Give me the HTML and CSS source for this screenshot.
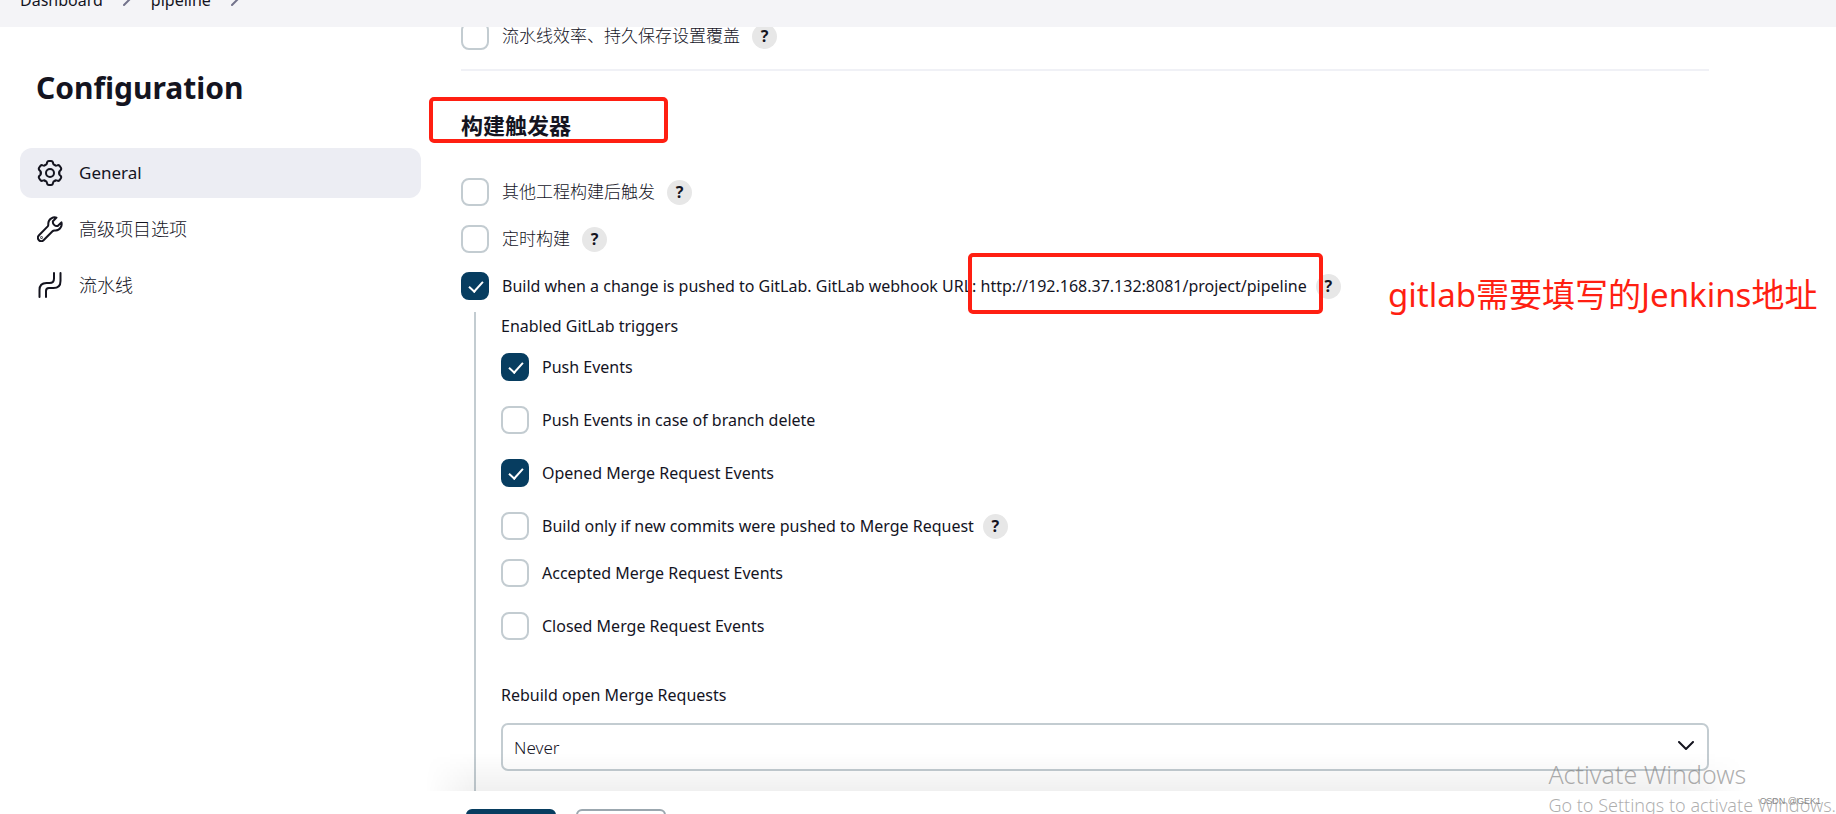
FILE: index.html
```html
<!DOCTYPE html>
<html lang="zh-CN">
  <head>
    <meta charset="UTF-8" />
    <meta name="viewport" content="width=device-width, initial-scale=1.0" />
    <title>pipeline Config</title>
    <link rel="stylesheet" href="styles.css">
  </head>

  <body>
    <nav class="breadcrumbs">
      <a href="#">Dashboard</a>
      <svg class="crumb-arrow" viewBox="0 0 8 16"><path d="M1 2l6 6-6 6" /></svg>
      <a href="#">pipeline</a>
      <svg class="crumb-arrow" viewBox="0 0 8 16"><path d="M1 2l6 6-6 6" /></svg>
    </nav>

    <div class="page">
      <aside class="sidebar">
        <h1>Configuration</h1>
        <a href="#" class="task active">
          <svg class="task-icon" viewBox="0 0 26 26">
            <path id="tooth" d="M8.300 4.900Q9.700 5 10 3Q10.200 1 12 1h2Q15.800 1 16 3Q16.300 5 17.700 4.900" />
            <use href="#tooth" transform="rotate(60 13 13)" />
            <use href="#tooth" transform="rotate(120 13 13)" />
            <use href="#tooth" transform="rotate(180 13 13)" />
            <use href="#tooth" transform="rotate(240 13 13)" />
            <use href="#tooth" transform="rotate(300 13 13)" />
            <circle cx="13" cy="13" r="4" />
          </svg>
          General
        </a>
        <a href="#" class="task zh">
          <svg class="task-icon" viewBox="0 0 26 26">
            <path d="M19.500 1.600c-3-1-8 1-8.200 5.600 0 1.500.2 2.300-.6 3.200L2 19.300c-3.200 3.400 1.500 8 4.800 4.700l8.700-8.800c.9-.9 1.700-.6 3.200-.6 4.600-.2 6.700-5.200 5.700-8.200l-3.700 3.600c-2.600.6-5.300-2-4.800-4.800z" />
            <circle cx="4.500" cy="21.600" r="0.300" />
          </svg>
          高级项目选项
        </a>
        <a href="#" class="task zh">
          <svg class="task-icon" viewBox="0 0 26 26">
            <path d="M2.500 25v-7q0-7 7-7h3q4.500 0 4.500-4.500V1M9 25v-6q0-3 3-3h4.500q7 0 7-7V1" />
          </svg>
          流水线
        </a>
      </aside>

      <main class="content">
        <form class="config">
          <div class="row first">
            <input type="checkbox" id="durability">
            <label for="durability" class="zh">流水线效率、持久保存设置覆盖</label>
            <button type="button" class="help">?</button>
          </div>

          <section class="triggers">
            <h2>构建触发器</h2>
            <div class="mark mark-title"></div>
            <div class="row">
              <input type="checkbox" id="upstream">
              <label for="upstream" class="zh">其他工程构建后触发</label>
              <button type="button" class="help">?</button>
            </div>
            <div class="row">
              <input type="checkbox" id="timer">
              <label for="timer" class="zh">定时构建</label>
              <button type="button" class="help">?</button>
            </div>
            <div class="row">
              <input type="checkbox" id="gitlab" checked>
              <label for="gitlab">Build when a change is pushed to GitLab. GitLab webhook URL: <span class="url">http://192.168.37.132:8081/project/pipeline<span class="mark mark-url"></span></span></label>
              <button type="button" class="help">?</button>
              <span class="note">gitlab需要填写的Jenkins地址</span>
            </div>

            <div class="nested">
              <p class="caption">Enabled GitLab triggers</p>
              <div class="row wide">
                <input type="checkbox" id="push" checked>
                <label for="push">Push Events</label>
              </div>
              <div class="row wide">
                <input type="checkbox" id="branch-delete">
                <label for="branch-delete">Push Events in case of branch delete</label>
              </div>
              <div class="row wide">
                <input type="checkbox" id="mr-opened" checked>
                <label for="mr-opened">Opened Merge Request Events</label>
              </div>
              <div class="row">
                <input type="checkbox" id="new-commits">
                <label for="new-commits">Build only if new commits were pushed to Merge Request</label>
                <button type="button" class="help">?</button>
              </div>
              <div class="row wide">
                <input type="checkbox" id="mr-accepted">
                <label for="mr-accepted">Accepted Merge Request Events</label>
              </div>
              <div class="row wide">
                <input type="checkbox" id="mr-closed">
                <label for="mr-closed">Closed Merge Request Events</label>
              </div>
              <label class="caption rebuild" for="rebuild">Rebuild open Merge Requests</label>
              <div class="select-box">
                <select id="rebuild">
                  <option>Never</option>
                </select>
                <svg class="chevron" viewBox="0 0 16 10"><path d="M1 1l7 7 7-7" /></svg>
              </div>
            </div>
          </section>
        </form>

        <div class="bottom-bar">
          <button type="button" class="btn btn-primary" aria-label="保存"></button>
          <button type="button" class="btn" aria-label="应用"></button>
        </div>
      </main>
    </div>

    <div class="activate">
      <p class="activate-title">Activate Windows</p>
      <p>Go to Settings to activate Windows.</p>
    </div>
    <div class="watermark">CSDN @GEK1</div>
  </body>
</html>
```

FILE: styles.css
```css
* {
  margin: 0;
  padding: 0;
  box-sizing: border-box;
}

body {
  font-family: "Noto Sans", "Noto Sans CJK SC", sans-serif;
  font-size: 16px;
  line-height: 24px;
  color: #14141f;
  background-color: white;
  display: flex;
  flex-direction: column;
  height: 100vh;
  overflow: hidden;
  position: relative;
}

a {
  color: inherit;
  text-decoration: none;
}

svg {
  fill: none;
  stroke: currentColor;
  stroke-width: 2;
  stroke-linecap: round;
  stroke-linejoin: round;
}

.breadcrumbs {
  display: flex;
  align-items: flex-end;
  gap: 20px;
  flex: none;
  height: 27px;
  padding: 0 20px 15px;
  background-color: #f4f4f7;
  overflow: hidden;
}

.crumb-arrow {
  width: 8px;
  height: 16px;
  margin-bottom: 5px;
  color: #73738c;
}

.page {
  display: flex;
  flex: 1;
  min-height: 0;
}

.sidebar {
  flex: none;
  width: 421px;
  padding: 41px 0 0 20px;
}

h1 {
  font-size: 30px;
  line-height: 40px;
  font-weight: 700;
  padding-left: 16px;
  margin-bottom: 40px;
}

.task {
  display: flex;
  align-items: center;
  gap: 16px;
  height: 50px;
  padding: 0 17px;
  margin-bottom: 6px;
  border-radius: 12px;
  font-size: 17px;
}

.task.zh {
  font-size: 18px;
  font-weight: 300;
}

.task.active {
  background-color: #ecedf3;
}

.task-icon {
  width: 26px;
  height: 26px;
}

.content {
  flex: 1;
  min-width: 0;
  display: flex;
  flex-direction: column;
  padding: 0 127px 0 40px;
}

.config {
  flex: 1;
  min-height: 0;
  display: flex;
  flex-direction: column;
  clip-path: inset(0 -128px 0 -40px);
}

.row {
  display: flex;
  align-items: center;
  flex: none;
  height: 28px;
  margin-bottom: 19px;
  position: relative;
}

.row.wide {
  margin-bottom: 25px;
}

.row.first {
  margin-top: -5px;
}

.row label {
  margin-left: 13px;
}

.row .zh {
  font-size: 17px;
  font-weight: 300;
  margin-right: 3px;
}

input[type="checkbox"] {
  appearance: none;
  width: 28px;
  height: 28px;
  border: 2px solid #c3ccd1;
  border-radius: 8px;
  background-color: white;
  position: relative;
}

input[type="checkbox"]:checked {
  border-color: #073d60;
  background-color: #073d60;
}

input[type="checkbox"]:checked::after {
  content: "";
  position: absolute;
  left: 9px;
  top: 4px;
  width: 6px;
  height: 12px;
  border: solid white;
  border-width: 0 2px 2px 0;
  transform: rotate(42deg);
}

.help {
  width: 25px;
  height: 25px;
  margin-left: 9px;
  border: none;
  border-radius: 50%;
  background-color: #e7e7e7;
  color: #14141f;
  font: 700 16px/25px "Noto Sans", sans-serif;
}

.triggers {
  display: flex;
  flex-direction: column;
  flex: 1;
  min-height: 0;
  position: relative;
  border-top: 2px solid #f0f1f6;
}

h2 {
  font-size: 22px;
  line-height: 30px;
  font-weight: 700;
  margin: 39px 0 38px;
}

.mark {
  position: absolute;
  border: 4px solid #ff1f12;
  border-radius: 5px;
}

.mark-title {
  left: -32px;
  top: 26px;
  width: 239px;
  height: 46px;
}

.url {
  position: relative;
}

.mark-url {
  left: -13px;
  right: -16px;
  top: -22px;
  height: 61px;
}

.note {
  position: absolute;
  left: 927px;
  top: -1px;
  color: #ff1f12;
  font-size: 33px;
  line-height: 48px;
  white-space: nowrap;
}

.nested {
  flex: 1;
  min-height: 0;
  margin: -7px 0 0 13px;
  padding-left: 25px;
  border-left: 2px solid #c3ccd1;
}

.caption {
  display: block;
  margin: 2px 0 15px;
}

.rebuild {
  margin: 43px 0 16px;
}

.select-box {
  position: relative;
}

select {
  appearance: none;
  display: block;
  width: 100%;
  height: 48px;
  padding: 0 11px;
  border: 2px solid #c3ccd1;
  border-radius: 7px;
  background-color: white;
  color: #14141f;
  font: 300 17px "Noto Sans", sans-serif;
}

.chevron {
  position: absolute;
  right: 15px;
  top: 18px;
  width: 16px;
  height: 10px;
}

.bottom-bar {
  flex: none;
  display: flex;
  gap: 20px;
  height: 23px;
  padding: 18px 5px 0;
  position: relative;
}

.bottom-bar::before {
  content: "";
  position: absolute;
  left: -36px;
  right: -36px;
  bottom: 100%;
  height: 38px;
  background: linear-gradient(to top, rgba(0, 0, 0, 0.06), transparent);
  mask-image: linear-gradient(to right, transparent, black 50px, black calc(100% - 60px), transparent);
  pointer-events: none;
}

.btn {
  width: 90px;
  height: 40px;
  border: 2px solid #9ba7af;
  border-radius: 6px;
  background-color: white;
}

.btn-primary {
  border-color: #073d60;
  background-color: #073d60;
}

.activate {
  position: absolute;
  right: 0;
  bottom: -5px;
  color: rgba(120, 120, 120, 0.6);
  font-size: 18px;
  line-height: 28px;
  font-weight: 300;
}

.activate-title {
  font-size: 25px;
  line-height: 34px;
}

.watermark {
  position: absolute;
  right: 15px;
  bottom: 4px;
  color: #888;
  font: 9px/18px "Liberation Sans", sans-serif;
}
```
